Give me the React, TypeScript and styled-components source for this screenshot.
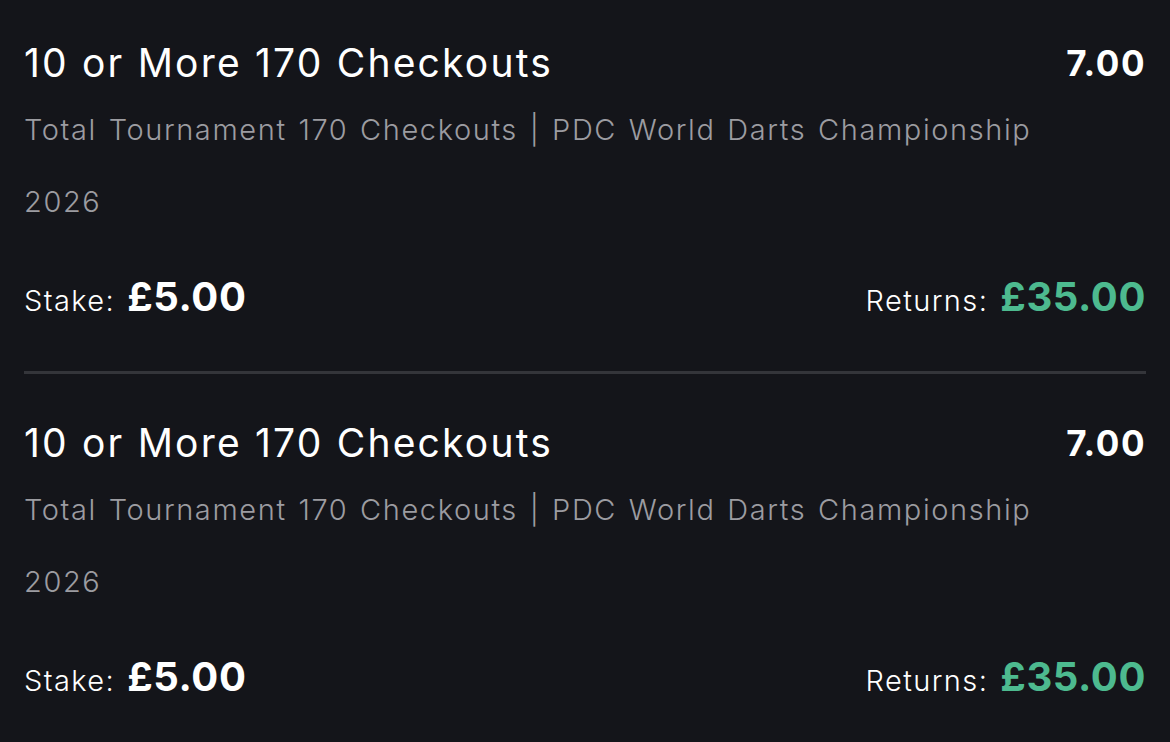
import React from "react"
import styled, { createGlobalStyle } from "styled-components"

const bets = [
  {
    selection: "10 or More 170 Checkouts",
    market: "Total Tournament 170 Checkouts",
    event: "PDC World Darts Championship 2026",
    odds: "7.00",
    stake: "£5.00",
    returns: "£35.00",
  },
  {
    selection: "10 or More 170 Checkouts",
    market: "Total Tournament 170 Checkouts",
    event: "PDC World Darts Championship 2026",
    odds: "7.00",
    stake: "£5.00",
    returns: "£35.00",
  },
]

function App() {
  return (
    <>
      <GlobalStyle />
      <Page>
        {bets.map((bet, i) => (
          <Bet key={i}>
            <Header>
              <Info>
                <Selection>{bet.selection}</Selection>
                <Market>{`${bet.market} | ${bet.event}`}</Market>
              </Info>
              <Odds>{bet.odds}</Odds>
            </Header>
            <Totals>
              <Figure>
                <Label>Stake:</Label>
                <Amount>{bet.stake}</Amount>
              </Figure>
              <Figure>
                <Label>Returns:</Label>
                <Amount $green>{bet.returns}</Amount>
              </Figure>
            </Totals>
          </Bet>
        ))}
      </Page>
    </>
  )
}

export default App

const GlobalStyle = createGlobalStyle`
  html, body {
    margin: 0;
    background: #14151a;
  }
  body {
    font-family: Inter, "Open Sans", sans-serif;
    color: #ffffff;
  }
`

const Page = styled.div`
  width: 1170px;
  height: 742px;
  overflow: hidden;
  padding: 0 24px;
  box-sizing: border-box;
`

const Bet = styled.div`
  padding: 42px 0 40px;
  border-bottom: 3px solid #34353a;

  &:first-child {
    padding-top: 36px;
  }
`

const Header = styled.div`
  display: flex;
  justify-content: space-between;
  align-items: flex-start;
  gap: 20px;
`

const Info = styled.div`
  flex: 1;
  min-width: 0;
`

const Selection = styled.div`
  font-size: 39px;
  line-height: 54px;
  font-weight: 400;
  letter-spacing: 2.2px;
  margin-bottom: 4px;
`

const Market = styled.div`
  font-size: 29px;
  line-height: 72px;
  font-weight: 300;
  letter-spacing: 1.6px;
  word-spacing: 2px;
  color: #9c9ca1;
`

const Odds = styled.div`
  font-size: 35px;
  line-height: 54px;
  font-weight: 700;
  letter-spacing: 1.5px;
  flex-shrink: 0;
`

const Totals = styled.div`
  display: flex;
  justify-content: space-between;
  align-items: baseline;
  margin-top: 29px;
  line-height: 60px;
`

const Figure = styled.div`
  display: flex;
  align-items: baseline;
  gap: 12px;
`

const Label = styled.span`
  font-size: 29px;
  font-weight: 300;
  letter-spacing: 1.4px;
`

const Amount = styled.span<{ $green?: boolean }>`
  font-size: 40px;
  font-weight: 700;
  letter-spacing: 0.6px;
  color: ${(p) => (p.$green ? "#4dba8f" : "#ffffff")};
`
